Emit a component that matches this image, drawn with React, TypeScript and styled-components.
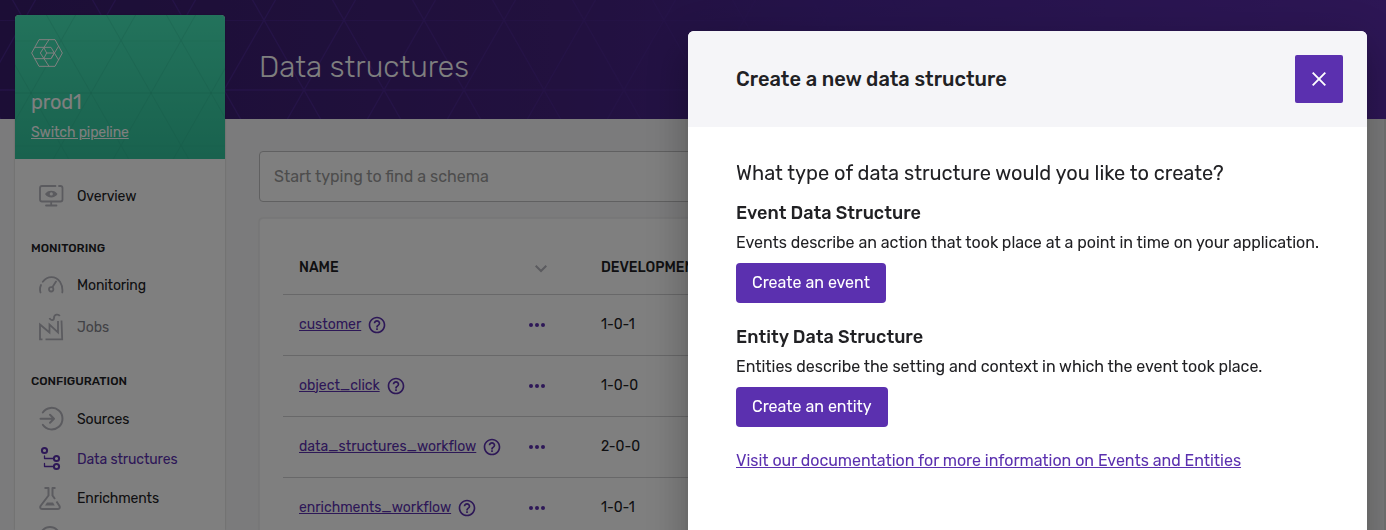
import React from 'react';
import styled, { createGlobalStyle, css } from 'styled-components';

const GlobalStyle = createGlobalStyle`
  *, *::before, *::after { box-sizing: border-box; }
  body {
    margin: 0;
    overflow: hidden;
    font-family: Rubik, Roboto, "Liberation Sans", sans-serif;
    color: #212124;
    background: #f7f7f8;
  }
  h1, h2, h3, h4, p { margin: 0; }
`;

const brand = '#5b30af';
const iconGrey = '#b6b6be';

/* ---------- Page frame ---------- */

const Page = styled.div`
  display: grid;
  grid-template-columns: 15px 210px 34px minmax(0, 1fr);
  grid-template-rows: 119px minmax(0, 1fr);
  height: 100vh;
  overflow: hidden;
`;

const Banner = styled.header`
  grid-column: 1 / -1;
  grid-row: 1;
  min-width: 0;
  overflow: hidden;
  background: linear-gradient(90deg, #381d6c 0%, #44227e 40%, #4a2696 60%, #5a2caa 100%);
  svg { display: block; }
`;

const PageTitle = styled.h1`
  grid-column: 4;
  grid-row: 1;
  align-self: center;
  padding-top: 15px;
  font-size: 30px;
  line-height: 40px;
  font-weight: 300;
  color: #fff;
`;

/* ---------- Sidebar ---------- */

const Sidebar = styled.aside`
  grid-column: 2;
  grid-row: 1 / 3;
  margin-top: 15px;
  display: flex;
  flex-direction: column;
  overflow: hidden;
  background: #fff;
  border-radius: 4px 4px 0 0;
  box-shadow: 0 0 2px rgba(0, 0, 0, 0.25);
`;

const PipelineCard = styled.section`
  display: grid;
  flex: none;
  height: 144px;
  background: linear-gradient(180deg, #46e6b8 0%, #32c49c 100%);
  > * { grid-area: 1 / 1; }
`;

const PipelineInfo = styled.div`
  display: flex;
  flex-direction: column;
  align-items: flex-start;
  padding: 24px 16px 0;
  color: #fff;
  svg { display: block; }
`;

const PipelineName = styled.div`
  margin-top: 22px;
  font-size: 20px;
  line-height: 26px;
  letter-spacing: -0.15px;
`;

const PipelineSwitch = styled.a`
  margin-top: 8px;
  font-size: 14px;
  line-height: 20px;
  letter-spacing: -0.12px;
  text-decoration: underline;
`;

const Nav = styled.nav`
  display: flex;
  flex-direction: column;
  padding-top: 17px;
`;

const NavHeading = styled.h4`
  padding: 24px 16px 9px;
  font-size: 12px;
  line-height: 16px;
  font-weight: 500;
`;

const NavItem = styled.a<{ $tone?: 'active' | 'muted'; $height?: number }>`
  display: flex;
  align-items: center;
  flex: none;
  gap: 13px;
  height: ${(p) => p.$height ?? 40}px;
  padding-left: 24px;
  font-size: 14px;
  letter-spacing: -0.11px;
  color: #212124;
  svg { color: ${iconGrey}; flex: none; }
  ${(p) => p.$tone === 'active' && css`
    color: ${brand};
    svg { color: ${brand}; }
  `}
  ${(p) => p.$tone === 'muted' && css`color: #84848c;`}
`;

const NavGroup = styled.div`
  display: flex;
  flex-direction: column;
  padding-top: 1px;
`;

/* ---------- Main ---------- */

const Main = styled.main`
  grid-column: 4;
  grid-row: 2;
  display: flex;
  flex-direction: column;
  gap: 16px;
  padding: 32px 33px 0 0;
  border-right: 2px solid #e6e6e6;
`;

const SearchField = styled.div`
  flex: none;
  display: flex;
  align-items: center;
  height: 51px;
  padding: 0 14px;
  border: 1px solid #c0c0c2;
  border-radius: 4px;
  background: #fff;
  font-size: 16px;
  color: #9a9a9a;
`;

const TableCard = styled.section`
  flex: none;
  height: 500px;
  padding: 24px 24px 0;
  background: #fff;
  border: 1px solid #f0f0f2;
  border-radius: 4px;
  box-shadow: 0 0 2px rgba(0, 0, 0, 0.12);
`;

const TableRow = styled.div<{ $head?: boolean }>`
  display: grid;
  grid-template-columns: 230px 72px 1fr;
  align-items: center;
  height: ${(p) => (p.$head ? 52 : 61)}px;
  margin: 0 -1px;
  padding: 0 15px 2px 16px;
  border-bottom: 1px solid #d0d0d2;
  font-size: 14px;
  letter-spacing: -0.02px;
  ${(p) => p.$head && css`font-weight: 500;`}
`;

const NameCell = styled.div`
  display: flex;
  align-items: center;
  gap: 6px;
  color: ${brand};
  svg { margin-top: 2px; }
`;

const SchemaLink = styled.a`
  text-decoration: underline;
`;

const IconCell = styled.div<{ $offset?: number }>`
  display: flex;
  padding-left: ${(p) => p.$offset ?? 0}px;
  padding-top: 2px;
  color: ${brand};
`;

/* ---------- Dialog ---------- */

const Backdrop = styled.div`
  position: fixed;
  inset: 0;
  display: flex;
  justify-content: flex-end;
  padding: 31px 19px 0 0;
  background: rgba(0, 0, 0, 0.5);
`;

const Dialog = styled.div`
  width: 679px;
  height: 560px;
  overflow: hidden;
  border-radius: 6px;
  background: #fff;
  box-shadow: 0 11px 15px -7px rgba(0, 0, 0, 0.2), 0 24px 38px 3px rgba(0, 0, 0, 0.14),
    0 9px 46px 8px rgba(0, 0, 0, 0.12);
`;

const DialogHeader = styled.div`
  display: flex;
  align-items: center;
  justify-content: space-between;
  height: 96px;
  padding: 0 24px 0 48px;
  background: #f5f5f8;
`;

const DialogTitle = styled.h2`
  font-size: 20px;
  font-weight: 500;
  letter-spacing: 0.03px;
`;

const CloseButton = styled.button`
  display: grid;
  place-items: center;
  width: 48px;
  height: 48px;
  padding: 0;
  border: 0;
  border-radius: 2px;
  background: ${brand};
  color: #fff;
`;

const DialogBody = styled.div`
  display: flex;
  flex-direction: column;
  align-items: flex-start;
  padding: 32px 48px;
`;

const Question = styled.p`
  font-size: 20px;
  line-height: 28px;
  letter-spacing: -0.025px;
  white-space: nowrap;
`;

const Choice = styled.section`
  display: flex;
  flex-direction: column;
  align-items: flex-start;
  margin-top: 13px;
  & + & { margin-top: 21px; }
`;

const ChoiceTitle = styled.h3`
  font-size: 18px;
  line-height: 26px;
  font-weight: 500;
  letter-spacing: 0.04px;
`;

const ChoiceText = styled.p`
  margin-top: 5px;
  font-size: 16px;
  line-height: 24px;
  letter-spacing: -0.022px;
  white-space: nowrap;
`;

const PrimaryButton = styled.button`
  height: 40px;
  margin-top: 8px;
  padding: 0 16px 2px;
  border: 0;
  border-radius: 4px;
  background: ${brand};
  color: #fff;
  font: inherit;
  font-size: 16px;
`;

const DocsLink = styled.a`
  margin-top: 22px;
  font-size: 16px;
  line-height: 24px;
  letter-spacing: -0.022px;
  color: ${brand};
  text-decoration: underline;
  white-space: nowrap;
`;

/* ---------- Drawings ---------- */

const BannerPattern = () => (
  <svg width="1386" height="119">
    <defs>
      <pattern id="bannerTriangles" width="80" height="140" patternUnits="userSpaceOnUse" x="24" y="20">
        <path d="M0 0H80M0 70H80M0 0L80 140M80 0L0 140" stroke="#6236c0" strokeWidth="1.3" fill="none" />
      </pattern>
      <linearGradient id="bannerFade">
        <stop offset="0" stopColor="#fff" stopOpacity="0.38" />
        <stop offset="0.25" stopColor="#fff" stopOpacity="0.34" />
        <stop offset="0.65" stopColor="#fff" stopOpacity="0" />
      </linearGradient>
      <mask id="bannerMask"><rect width="1386" height="119" fill="url(#bannerFade)" /></mask>
    </defs>
    <rect width="1386" height="119" fill="url(#bannerTriangles)" mask="url(#bannerMask)" />
  </svg>
);

const CardPattern = () => (
  <svg width="210" height="144">
    <defs>
      <pattern id="cardTriangles" width="60" height="105" patternUnits="userSpaceOnUse" x="46" y="25.5">
        <path d="M0 0H60M0 52.5H60M0 0L60 105M60 0L0 105" stroke="#1fa580" strokeOpacity="0.28" strokeWidth="1" fill="none" />
      </pattern>
    </defs>
    <rect width="210" height="144" fill="url(#cardTriangles)" />
  </svg>
);

const Logo = () => (
  <svg width="32" height="28" viewBox="0 0 96 84" fill="none" stroke="currentColor" strokeWidth="3">
    <path d="M24 2H72L94 42L72 82H24L2 42Z" />
    <path d="M54 2L28 42L54 82M12 25H60L70 42L60 59H10M83 21L60 59M83 63L70 42H47M38 25L47 42L38 59" />
  </svg>
);

const iconProps = {
  width: 25, height: 28, viewBox: '0 0 25 28', fill: 'none', stroke: 'currentColor',
  strokeWidth: 1.8, strokeLinecap: 'round' as const, strokeLinejoin: 'round' as const,
};

const OverviewIcon = () => (
  <svg {...iconProps}>
    <path d="M16.5 4H3Q1 4 1 6V17.5Q1 19.5 3 19.5H21.5Q23.5 19.5 23.5 17.5V6Q23.5 4 21.5 4H20M12.2 20V23M7 23.5H17.5" />
    <path d="M6 12C8.500 7.500 16 7.500 18.500 12C16 16.500 8.500 16.500 6 12Z" fill="currentColor" stroke="none" />
    <circle cx="12.300" cy="11.900" r="1.600" fill="#fff" stroke="none" />
  </svg>
);

const MonitoringIcon = () => (
  <svg {...iconProps}>
    <path d="M1.500 21.500Q.3 17.500 2 14M3.800 10.800C8.500 4.500 16.500 4.500 21 10.800Q24 15.500 23.300 21.500M13.500 16L17 10.500" />
    <circle cx="12.200" cy="18.300" r="2.200" />
  </svg>
);

const JobsIcon = () => (
  <svg {...iconProps} strokeLinecap="butt" strokeLinejoin="miter">
    <path d="M3.500 26.300H1V11.500L10.500 19.500V11.500L19 19.500V8M22.500 7.500L23.200 26.300H6.500" />
    <path d="M10.500 5C11.500 8 15 7.500 15 5C15 1 19.500 .8 20.800 3" />
  </svg>
);

const SourcesIcon = () => (
  <svg {...iconProps} strokeWidth={2}>
    <path d="M3.800 7.500A10.800 10.800 0 1 1 3.800 19.800M1.500 13.800H14.500M11 9.800L15 13.800L11 17.800" />
  </svg>
);

const StructuresIcon = () => (
  <svg {...iconProps} strokeWidth={2}>
    <circle cx="5.500" cy="5.500" r="2.600" />
    <circle cx="17.500" cy="13.500" r="2.600" />
    <circle cx="17.500" cy="21.500" r="2.600" />
    <path d="M5.500 11V13.500H14.500M5.500 18.500V21.500H14.500" strokeWidth="1.300" />
  </svg>
);

const EnrichmentsIcon = () => (
  <svg {...iconProps} strokeWidth={2} strokeLinecap="butt">
    <path d="M5.500 4H9.500V11.500L1.500 22Q.5 25 3.500 25H18.500Q21.500 25 20.500 22L17.500 17.500M16 15L13.500 11.500V4H16.500" />
    <path d="M8 18.500H14L15.800 21.500H6Z" fill="currentColor" stroke="none" />
  </svg>
);

const ModelIcon = () => (
  <svg {...iconProps}>
    <circle cx="11" cy="14" r="10" />
  </svg>
);

const HelpIcon = () => (
  <svg width="20" height="20" viewBox="0 0 24 24" fill="currentColor">
    <path d="M11 18h2v-2h-2v2zm1-16C6.480 2 2 6.480 2 12s4.480 10 10 10 10-4.480 10-10S17.520 2 12 2zm0 18c-4.410 0-8-3.590-8-8s3.590-8 8-8 8 3.590 8 8-3.590 8-8 8zm0-14c-2.210 0-4 1.790-4 4h2c0-1.100.9-2 2-2s2 .9 2 2c0 2-3 1.750-3 5h2c0-2.250 3-2.500 3-5 0-2.210-1.790-4-4-4z" />
  </svg>
);

const MoreIcon = () => (
  <svg width="16" height="4" viewBox="0 0 16 4" fill="currentColor">
    <circle cx="2" cy="2" r="2" />
    <circle cx="8" cy="2" r="2" />
    <circle cx="14" cy="2" r="2" />
  </svg>
);

const ChevronIcon = () => (
  <svg width="12" height="8" viewBox="0 0 12 8" fill="none" stroke={iconGrey} strokeWidth="2">
    <path d="M.7 .7L6 6L11.300 .7" />
  </svg>
);

const CloseIcon = () => (
  <svg width="14" height="14" viewBox="0 0 14 14" stroke="currentColor" strokeWidth="1.900">
    <path d="M.7 .7L13.300 13.300M13.300 .7L.7 13.300" />
  </svg>
);

/* ---------- Content ---------- */

const schemas = [
  { name: 'customer', version: '1-0-1' },
  { name: 'object_click', version: '1-0-0' },
  { name: 'data_structures_workflow', version: '2-0-0' },
  { name: 'enrichments_workflow', version: '1-0-1' },
];

export default function App() {
  return (
    <>
      <GlobalStyle />
      <Page>
        <Banner><BannerPattern /></Banner>
        <PageTitle>Data structures</PageTitle>
        <Sidebar>
          <PipelineCard>
            <CardPattern />
            <PipelineInfo>
              <Logo />
              <PipelineName>prod1</PipelineName>
              <PipelineSwitch>Switch pipeline</PipelineSwitch>
            </PipelineInfo>
          </PipelineCard>
          <Nav>
            <NavItem><OverviewIcon />Overview</NavItem>
            <NavHeading>MONITORING</NavHeading>
            <NavItem><MonitoringIcon />Monitoring</NavItem>
            <NavItem $tone="muted" $height={44}><JobsIcon />Jobs</NavItem>
            <NavHeading>CONFIGURATION</NavHeading>
            <NavGroup>
              <NavItem><SourcesIcon />Sources</NavItem>
              <NavItem $tone="active"><StructuresIcon />Data structures</NavItem>
              <NavItem $height={38}><EnrichmentsIcon />Enrichments</NavItem>
              <NavItem><ModelIcon /></NavItem>
            </NavGroup>
          </Nav>
        </Sidebar>
        <Main>
          <SearchField>Start typing to find a schema</SearchField>
          <TableCard>
            <TableRow $head>
              <span>NAME</span>
              <IconCell $offset={6}><ChevronIcon /></IconCell>
              <span>DEVELOPMENT</span>
            </TableRow>
            {schemas.map((s) => (
              <TableRow key={s.name}>
                <NameCell>
                  <SchemaLink>{s.name}</SchemaLink>
                  <HelpIcon />
                </NameCell>
                <IconCell><MoreIcon /></IconCell>
                <span>{s.version}</span>
              </TableRow>
            ))}
          </TableCard>
        </Main>
      </Page>
      <Backdrop>
        <Dialog role="dialog">
          <DialogHeader>
            <DialogTitle>Create a new data structure</DialogTitle>
            <CloseButton aria-label="Close"><CloseIcon /></CloseButton>
          </DialogHeader>
          <DialogBody>
            <Question>What type of data structure would you like to create?</Question>
            <Choice>
              <ChoiceTitle>Event Data Structure</ChoiceTitle>
              <ChoiceText>
                Events describe an action that took place at a point in time on your application.
              </ChoiceText>
              <PrimaryButton>Create an event</PrimaryButton>
            </Choice>
            <Choice>
              <ChoiceTitle>Entity Data Structure</ChoiceTitle>
              <ChoiceText>
                Entities describe the setting and context in which the event took place.
              </ChoiceText>
              <PrimaryButton>Create an entity</PrimaryButton>
            </Choice>
            <DocsLink>Visit our documentation for more information on Events and Entities</DocsLink>
          </DialogBody>
        </Dialog>
      </Backdrop>
    </>
  );
}
